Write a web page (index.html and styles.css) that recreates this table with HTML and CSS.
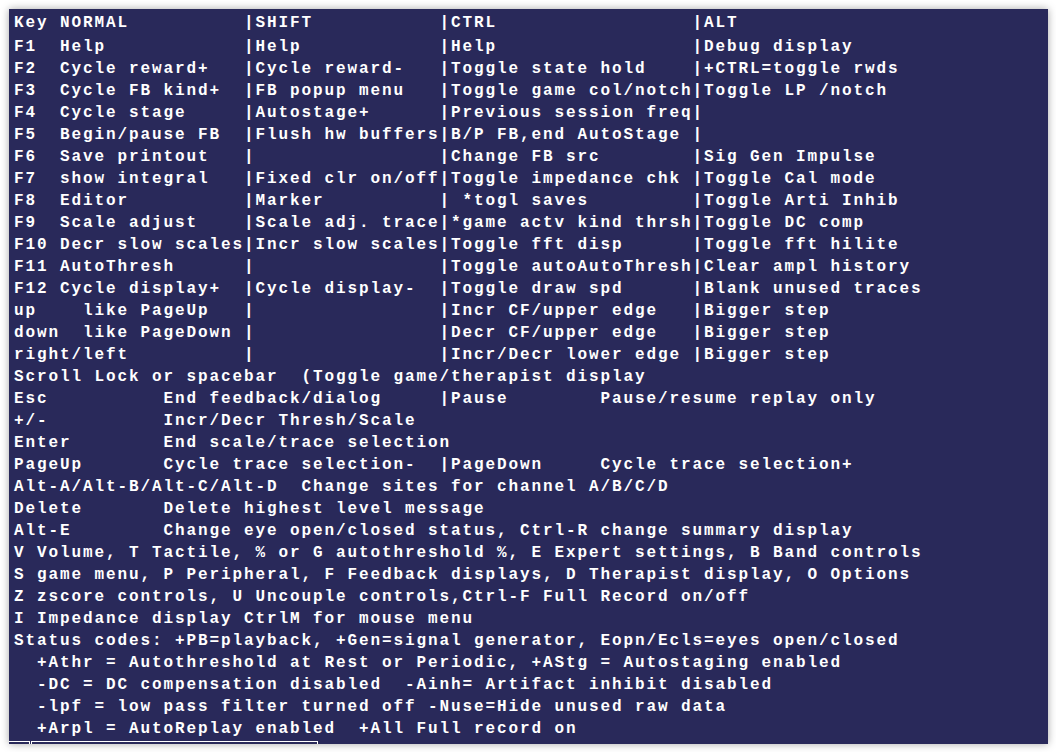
FILE: index.html
```html
<!DOCTYPE html>
<html lang="en">
<head>
    <meta charset="UTF-8">
    <title>Key help</title>
    <link rel="stylesheet" href="styles.css">
</head>
<body>
    <div class="help-panel">
        <div class="help-text help-head">Key NORMAL          |SHIFT           |CTRL                 |ALT</div>
<pre class="help-text help-body">F1  Help            |Help            |Help                 |Debug display
F2  Cycle reward+   |Cycle reward-   |Toggle state hold    |+CTRL=toggle rwds
F3  Cycle FB kind+  |FB popup menu   |Toggle game col/notch|Toggle LP /notch
F4  Cycle stage     |Autostage+      |Previous session freq|
F5  Begin/pause FB  |Flush hw buffers|B/P FB,end AutoStage |
F6  Save printout   |                |Change FB src        |Sig Gen Impulse
F7  show integral   |Fixed clr on/off|Toggle impedance chk |Toggle Cal mode
F8  Editor          |Marker          | *togl saves         |Toggle Arti Inhib
F9  Scale adjust    |Scale adj. trace|*game actv kind thrsh|Toggle DC comp
F10 Decr slow scales|Incr slow scales|Toggle fft disp      |Toggle fft hilite
F11 AutoThresh      |                |Toggle autoAutoThresh|Clear ampl history
F12 Cycle display+  |Cycle display-  |Toggle draw spd      |Blank unused traces
up    like PageUp   |                |Incr CF/upper edge   |Bigger step
down  like PageDown |                |Decr CF/upper edge   |Bigger step
right/left          |                |Incr/Decr lower edge |Bigger step
Scroll Lock or spacebar  (Toggle game/therapist display
Esc          End feedback/dialog     |Pause        Pause/resume replay only
+/-          Incr/Decr Thresh/Scale
Enter        End scale/trace selection
PageUp       Cycle trace selection-  |PageDown     Cycle trace selection+
Alt-A/Alt-B/Alt-C/Alt-D  Change sites for channel A/B/C/D
Delete       Delete highest level message
Alt-E        Change eye open/closed status, Ctrl-R change summary display
V Volume, T Tactile, % or G autothreshold %, E Expert settings, B Band controls
S game menu, P Peripheral, F Feedback displays, D Therapist display, O Options
Z zscore controls, U Uncouple controls,Ctrl-F Full Record on/off
I Impedance display CtrlM for mouse menu
Status codes: +PB=playback, +Gen=signal generator, Eopn/Ecls=eyes open/closed
  +Athr = Autothreshold at Rest or Periodic, +AStg = Autostaging enabled
  -DC = DC compensation disabled  -Ainh= Artifact inhibit disabled
  -lpf = low pass filter turned off -Nuse=Hide unused raw data
  +Arpl = AutoReplay enabled  +All Full record on</pre>
        <div class="status-strip">
            <div class="status-box first"></div>
            <div class="status-box second"></div>
        </div>
    </div>
</body>
</html>
```

FILE: styles.css
```css
body {
    margin: 0;
    padding: 9px 8px 8px 9px;
    background-color: #fff;
}
.help-panel {
    width: 1039px;
    height: 735px;
    background-color: #29295a;
    box-shadow: 0 0 8px rgba(0, 0, 0, 0.35);
    display: flex;
    flex-direction: column;
}
.help-text {
    margin: 0;
    padding-left: 5px;
    color: #fff;
    font-family: "Liberation Mono", monospace;
    font-weight: bold;
    font-size: 16px;
    letter-spacing: 1.9px;
    line-height: 22px;
    white-space: pre;
}
.help-head {
    padding-top: 3px;
    margin-bottom: 2px;
}
.help-body {
    flex: 1;
    overflow: hidden;
}
.status-strip {
    height: 3px;
    display: flex;
    overflow: hidden;
}
.status-box {
    height: 10px;
    border-top: 1px solid #fff;
    box-sizing: border-box;
}
.first {
    width: 21px;
    border-right: 1px solid #fff;
}
.second {
    width: 287px;
    margin-left: 1px;
    border-left: 1px solid #fff;
    border-right: 1px solid #fff;
}
```
